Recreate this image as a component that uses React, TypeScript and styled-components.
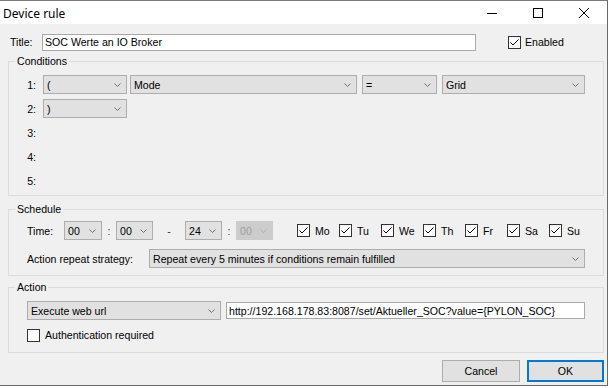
import styled, { createGlobalStyle } from 'styled-components';

const GlobalStyle = createGlobalStyle`
  html, body {
    margin: 0;
    padding: 0;
    background: #ffffff;
  }
  body {
    font-family: "Liberation Sans", Arial, sans-serif;
    font-size: 10.6px;
    color: #000;
  }
`;

const Window = styled.div`
  box-sizing: border-box;
  width: 608px;
  height: 386px;
  border-top: 1px solid #7a7a7a;
  border-right: 1px solid #6a6a6a;
  border-bottom: 1px solid #6a6a6a;
  background: #f0f0f0;
  display: flex;
  flex-direction: column;
`;

const TitleBar = styled.div`
  height: 23px;
  background: #ffffff;
  display: flex;
  align-items: center;
  padding-left: 3px;
  font-family: "Segoe UI", "Noto Sans", sans-serif;
  font-size: 12px;
`;

const TitleText = styled.div`
  flex: 1;
  margin-top: 1px;
`;

const CaptionButton = styled.div`
  width: 46px;
  height: 23px;
  display: flex;
  align-items: center;
  justify-content: center;
`;

const Content = styled.div`
  flex: 1;
  display: flex;
  flex-direction: column;
  padding: 0 3px 0 8px;
`;

const TitleRow = styled.div`
  display: flex;
  align-items: center;
  height: 18px;
  margin-top: 9px;
  padding-left: 2px;
`;

const Label = styled.span<{ $w?: number }>`
  display: inline-block;
  width: ${(p) => (p.$w ? `${p.$w}px` : 'auto')};
  white-space: nowrap;
  flex-shrink: 0;
`;

const TextBox = styled.div<{ $w: number }>`
  box-sizing: border-box;
  width: ${(p) => p.$w}px;
  height: 17px;
  background: #ffffff;
  border: 1px solid #a9a9a9;
  padding-left: 2px;
  display: flex;
  align-items: center;
  white-space: nowrap;
  overflow: hidden;
  flex-shrink: 0;
`;

const Spacer = styled.div<{ $w: number }>`
  width: ${(p) => p.$w}px;
  flex-shrink: 0;
`;

const Group = styled.fieldset<{ $mt: number }>`
  margin: ${(p) => p.$mt}px 0 0 0;
  padding: 0;
  border: 1px solid #dcdcdc;
  min-width: 0;
`;

const Legend = styled.legend`
  margin-left: 6px;
  padding: 0 2px;
  line-height: 14px;
  font-size: 10.6px;
`;

const GroupBody = styled.div<{ $pt: number; $pb: number; $gap: number }>`
  display: flex;
  flex-direction: column;
  gap: ${(p) => p.$gap}px;
  padding: ${(p) => p.$pt}px 0 ${(p) => p.$pb}px 18px;
`;

const Row = styled.div<{ $h?: number }>`
  display: flex;
  align-items: center;
  height: ${(p) => p.$h ?? 19}px;
`;

const RowNum = styled.span`
  width: 9px;
  text-align: right;
  margin-right: 7px;
  flex-shrink: 0;
`;

const ComboBox = styled.div<{ $w: number; $ml?: number; $disabled?: boolean }>`
  box-sizing: border-box;
  width: ${(p) => p.$w}px;
  height: 19px;
  margin-left: ${(p) => p.$ml ?? 0}px;
  background: ${(p) => (p.$disabled ? '#cccccc' : '#e1e1e1')};
  border: 1px solid ${(p) => (p.$disabled ? '#cccccc' : '#adadad')};
  color: ${(p) => (p.$disabled ? '#a0a0a0' : '#000')};
  display: flex;
  align-items: center;
  padding: 0 5px 0 3px;
  flex-shrink: 0;
  white-space: nowrap;
`;

const ComboText = styled.span`
  flex: 1;
  overflow: hidden;
`;

const Sep = styled.span<{ $w: number }>`
  width: ${(p) => p.$w}px;
  text-align: center;
  flex-shrink: 0;
  color: #333;
`;

const CheckItem = styled.label<{ $w?: number; $gap?: number }>`
  display: flex;
  align-items: center;
  gap: ${(p) => p.$gap ?? 5}px;
  width: ${(p) => (p.$w ? `${p.$w}px` : 'auto')};
  flex-shrink: 0;
  white-space: nowrap;
`;

const Box = styled.span`
  box-sizing: border-box;
  width: 13px;
  height: 13px;
  border: 1px solid #333333;
  background: #ffffff;
  display: flex;
  align-items: center;
  justify-content: center;
`;

const Days = styled.div`
  display: flex;
  margin-left: 24px;
`;

const ButtonRow = styled.div`
  display: flex;
  justify-content: flex-end;
  gap: 7px;
  margin-top: 7px;
`;

const Button = styled.div<{ $primary?: boolean; $w: number }>`
  box-sizing: border-box;
  width: ${(p) => p.$w}px;
  height: 22px;
  background: #e1e1e1;
  border: 1px solid ${(p) => (p.$primary ? '#0078d7' : '#adadad')};
  box-shadow: ${(p) => (p.$primary ? 'inset 0 0 0 1px #0078d7' : 'none')};
  display: flex;
  align-items: center;
  justify-content: center;
`;

const Chevron = ({ color = '#606060' }: { color?: string }) => (
  <svg width="7" height="4" viewBox="0 0 7 4">
    <polyline points="0.5,0.5 3.5,3.5 6.5,0.5" fill="none" stroke={color} strokeWidth="1" />
  </svg>
);

const Combo = ({ w, value, ml, disabled }: { w: number; value: string; ml?: number; disabled?: boolean }) => (
  <ComboBox $w={w} $ml={ml} $disabled={disabled}>
    <ComboText>{value}</ComboText>
    <Chevron color={disabled ? '#b0b0b0' : '#707070'} />
  </ComboBox>
);

const Check = ({ checked, text, w, gap }: { checked: boolean; text: string; w?: number; gap?: number }) => (
  <CheckItem $w={w} $gap={gap}>
    <Box>
      {checked && (
        <svg width="11" height="11" viewBox="0 0 11 11">
          <polyline points="1.5,5.5 4,8 9.5,2.5" fill="none" stroke="#000" strokeWidth="1" />
        </svg>
      )}
    </Box>
    {text}
  </CheckItem>
);

const days = ['Mo', 'Tu', 'We', 'Th', 'Fr', 'Sa', 'Su'];

export default function App() {
  return (
    <>
      <GlobalStyle />
      <Window>
        <TitleBar>
          <TitleText>Device rule</TitleText>
          <CaptionButton>
            <svg width="10" height="10" viewBox="0 0 10 10">
              <line x1="0" y1="5.5" x2="10" y2="5.5" stroke="#000" strokeWidth="1" />
            </svg>
          </CaptionButton>
          <CaptionButton>
            <svg width="10" height="10" viewBox="0 0 10 10">
              <rect x="0.5" y="0.5" width="9" height="9" fill="none" stroke="#000" strokeWidth="1" />
            </svg>
          </CaptionButton>
          <CaptionButton>
            <svg width="10" height="10" viewBox="0 0 10 10">
              <path d="M0 0 L10 10 M10 0 L0 10" stroke="#000" strokeWidth="1" />
            </svg>
          </CaptionButton>
        </TitleBar>

        <Content>
          <TitleRow>
            <Label $w={32}>Title:</Label>
            <TextBox $w={434}>SOC Werte an IO Broker</TextBox>
            <Spacer $w={32} />
            <Check checked text="Enabled" gap={4} />
          </TitleRow>

          <Group $mt={3}>
            <Legend>Conditions</Legend>
            <GroupBody $pt={7} $pb={5} $gap={5}>
              <Row>
                <RowNum>1:</RowNum>
                <Combo w={84} value="(" />
                <Combo w={227} ml={3} value="Mode" />
                <Combo w={75} ml={5} value="=" />
                <Combo w={143} ml={5} value="Grid" />
              </Row>
              <Row>
                <RowNum>2:</RowNum>
                <Combo w={84} value=")" />
              </Row>
              <Row>
                <RowNum>3:</RowNum>
              </Row>
              <Row>
                <RowNum>4:</RowNum>
              </Row>
              <Row>
                <RowNum>5:</RowNum>
              </Row>
            </GroupBody>
          </Group>

          <Group $mt={6}>
            <Legend>Schedule</Legend>
            <GroupBody $pt={5} $pb={7} $gap={9}>
              <Row>
                <Label $w={37}>Time:</Label>
                <Combo w={38} value="00" />
                <Sep $w={14}>:</Sep>
                <Combo w={37} value="00" />
                <Sep $w={32}>-</Sep>
                <Combo w={37} value="24" />
                <Sep $w={14}>:</Sep>
                <Combo w={37} value="00" disabled />
                <Days>
                  {days.map((d) => (
                    <Check key={d} checked text={d} w={42} />
                  ))}
                </Days>
              </Row>
              <Row>
                <Label $w={122}>Action repeat strategy:</Label>
                <Combo w={436} value="Repeat every 5 minutes if conditions remain fulfilled" />
              </Row>
            </GroupBody>
          </Group>

          <Group $mt={4}>
            <Legend>Action</Legend>
            <GroupBody $pt={7} $pb={10} $gap={8}>
              <Row>
                <Combo w={194} value="Execute web url" />
                <Spacer $w={5} />
                <TextBox $w={359}>http://192.168.178.83:8087/set/Aktueller_SOC?value={'{PYLON_SOC}'}</TextBox>
              </Row>
              <Row $h={14}>
                <Check checked={false} text="Authentication required" />
              </Row>
            </GroupBody>
          </Group>

          <ButtonRow>
            <Button $w={78}>Cancel</Button>
            <Button $w={77} $primary>OK</Button>
          </ButtonRow>
        </Content>
      </Window>
    </>
  );
}
